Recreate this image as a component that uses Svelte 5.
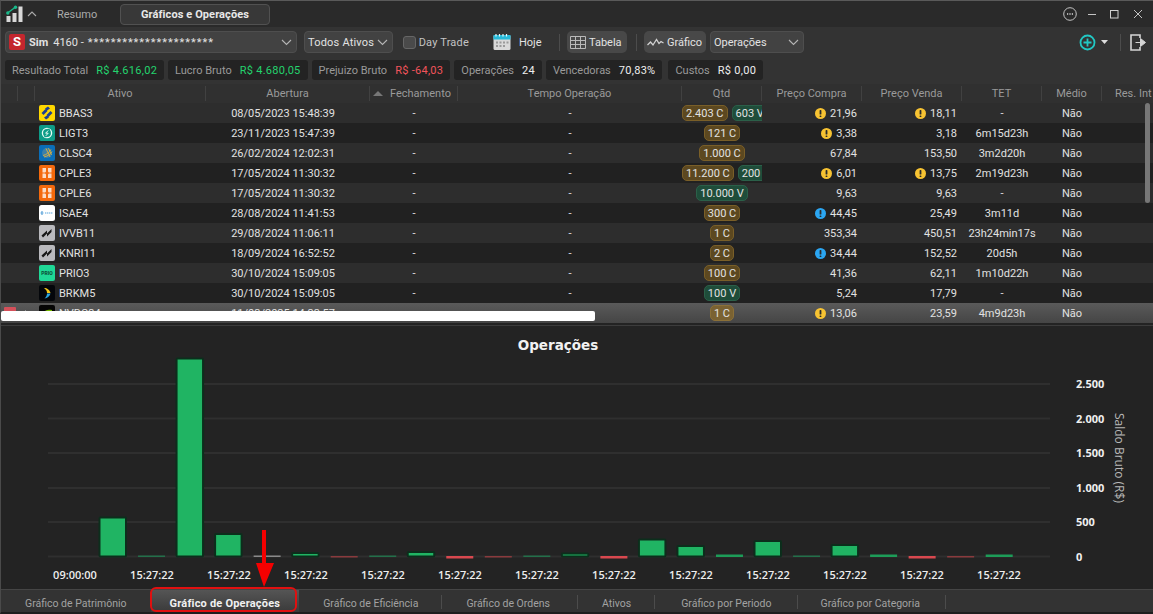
<script>
  const rows = [
    { logo: 'bb', sym: 'BBAS3', open: '08/05/2023 15:48:39', qty: [['2.403 C', 'c'], ['603 V', 'v']], buy: '21,96', buyFlag: 'y', sell: '18,11', sellFlag: 'y', tet: '-' },
    { logo: 'ligt', sym: 'LIGT3', open: '23/11/2023 15:47:39', qty: [['121 C', 'c']], buy: '3,38', buyFlag: 'y', sell: '3,18', tet: '6m15d23h' },
    { logo: 'clsc', sym: 'CLSC4', open: '26/02/2024 12:02:31', qty: [['1.000 C', 'c']], buy: '67,84', sell: '153,50', tet: '3m2d20h' },
    { logo: 'cple', sym: 'CPLE3', open: '17/05/2024 11:30:32', qty: [['11.200 C', 'c'], ['200 V', 'v']], buy: '6,01', buyFlag: 'y', sell: '13,75', sellFlag: 'y', tet: '2m19d23h' },
    { logo: 'cple', sym: 'CPLE6', open: '17/05/2024 11:30:32', qty: [['10.000 V', 'v']], buy: '9,63', sell: '9,63', tet: '-' },
    { logo: 'isae', sym: 'ISAE4', open: '28/08/2024 11:41:53', qty: [['300 C', 'c']], buy: '44,45', buyFlag: 'b', sell: '25,49', tet: '3m11d' },
    { logo: 'fii', sym: 'IVVB11', open: '29/08/2024 11:06:11', qty: [['1 C', 'c']], buy: '353,34', sell: '450,51', tet: '23h24min17s' },
    { logo: 'fii', sym: 'KNRI11', open: '18/09/2024 16:52:52', qty: [['2 C', 'c']], buy: '34,44', buyFlag: 'b', sell: '152,52', tet: '20d5h' },
    { logo: 'prio', sym: 'PRIO3', open: '30/10/2024 15:09:05', qty: [['100 C', 'c']], buy: '41,36', sell: '62,11', tet: '1m10d22h' },
    { logo: 'brkm', sym: 'BRKM5', open: '30/10/2024 15:09:05', qty: [['100 V', 'v']], buy: '5,24', sell: '17,79', tet: '-' },
    { logo: 'nvdc', sym: 'NVDC34', open: '11/03/2025 14:33:57', qty: [['1 C', 'c']], buy: '13,06', buyFlag: 'y', sell: '23,59', tet: '4m9d23h', selected: true }
  ]

  const summary = [
    ['Resultado Total', 'R$ 4.616,02', 'pos'],
    ['Lucro Bruto', 'R$ 4.680,05', 'pos'],
    ['Prejuizo Bruto', 'R$ -64,03', 'neg'],
    ['Operações', '24', ''],
    ['Vencedoras', '70,83%', ''],
    ['Custos', 'R$ 0,00', '']
  ]

  const tabs = ['Gráfico de Patrimônio', 'Gráfico de Operações', 'Gráfico de Eficiência', 'Gráfico de Ordens', 'Ativos', 'Gráfico por Periodo', 'Gráfico por Categoria']

  // bar heights in px above the zero line; dim = thin bars drawn fainter
  const bars = [
    [39, 'g'], [1, 'gd'], [198, 'g'], [22.5, 'g'], [1, 'n'], [3.5, 'g'], [-1, 'rd'], [1, 'gd'],
    [4.5, 'g'], [-2, 'r'], [-1, 'rd'], [1, 'gd'], [3, 'g'], [-2, 'r'], [17, 'g'], [10.5, 'g'],
    [2, 'gm'], [15.5, 'g'], [1, 'gd'], [11.5, 'g'], [2, 'gm'], [-2, 'r'], [-1, 'rd'], [2, 'gm']
  ]
  const zero = 556.5
  const yTicks = [['2.500', 384], ['2.000', 418.5], ['1.500', 453], ['1.000', 488], ['500', 522], ['0', 556.5]]
  const xLabels = ['09:00:00', ...Array(12).fill('15:27:22')]
  const fills = { g: '#20b463', gm: '#1d9c58', gd: '#23704a', n: '#8a8a8a', r: '#d9484f', rd: '#8a3a3d' }
</script>

{#snippet flag(kind)}
  <svg class="flag" width="11" height="11" viewBox="0 0 11 11">
    <circle cx="5.5" cy="5.5" r="5.5" fill={kind === 'y' ? '#f7c332' : '#2ba6f2'} />
    <rect x="4.6" y="2" width="1.8" height="4.6" rx="0.7" fill="#2a2a2a" />
    <rect x="4.6" y="7.4" width="1.8" height="1.7" rx="0.7" fill="#2a2a2a" />
  </svg>
{/snippet}

{#snippet logo(name)}
  <svg class="logo" width="16" height="16" viewBox="0 0 16 16">
    {#if name === 'bb'}
      <rect width="16" height="16" rx="2" fill="#ffd800" />
      <path d="M2.500 8l4-4 2 2-4 4zM7.500 10l4-4 2 2-4 4zM6 3.500l3-2 2 2-3 2zM5 12.500l3-2 2 2-3 2z" fill="#1c3f94" />
    {:else if name === 'ligt'}
      <rect width="16" height="16" rx="2" fill="#0e9c88" />
      <circle cx="8" cy="8" r="4.600" fill="none" stroke="#e8fbf6" stroke-width="1.300" />
      <path d="M10 4L6 12" stroke="#0e9c88" stroke-width="2.400" />
      <path d="M9.200 5.500L6.600 8.200h2.600L6.800 10.800" fill="none" stroke="#e8fbf6" stroke-width="1" />
    {:else if name === 'clsc'}
      <rect width="16" height="16" rx="2" fill="#0a6eb8" />
      <circle cx="8" cy="8" r="5" fill="#3d80a8" />
      <path d="M4 10.500C7 10 11 7 12 4.500M5 12C8 11.500 12 9 13 6.500M7 3.500L11 12M9.500 3.200L12.500 10" stroke="#d2ad45" stroke-width="1" fill="none" />
    {:else if name === 'cple'}
      <rect width="16" height="16" rx="2" fill="#f4690c" />
      <path d="M3.500 3h3.500v3.600l-.8.8H3.500zM9 3h3.500v4.400H9.800L9 6.600zM3.500 8.600h2.700l.8.800V13H3.500zM9.800 8.600h2.700V13H9V9.400z" fill="#fbdcc6" />
    {:else if name === 'isae'}
      <rect width="16" height="16" rx="2.500" fill="#fff" />
      <path d="M1.500 8h3M6 8h8" stroke="#58a6de" stroke-width="1.200" stroke-dasharray="1.400 .6" />
      <path d="M3 6v4" stroke="#3d8fd0" stroke-width="1" />
    {:else if name === 'fii'}
      <rect width="16" height="16" rx="2" fill="#b9b9bd" />
      <path d="M2.500 10.500L8 5.500v3L12.500 4v3L8 11.500v-3L4 12.500z" fill="#161616" />
    {:else if name === 'prio'}
      <rect width="16" height="16" rx="2" fill="#1fd896" />
      <text x="8" y="9.800" text-anchor="middle" class="prio">PRIO</text>
    {:else if name === 'brkm'}
      <rect width="16" height="16" rx="2" fill="#04060a" />
      <path d="M5 3c3 0 6 2 6.500 5H8C8 6 7 4.500 5 3z" fill="#f5c518" />
      <path d="M11.500 8.400C11 11 8.500 13 5.500 13.500 7 12 8 10.300 8 8.400z" fill="#2aa5e0" />
    {:else}
      <rect width="16" height="16" rx="2" fill="#050505" />
      <path d="M4 8c2-3 5-4 9-3v6H7c2 0 4-1 4-3-2-1-4 0-7 0z" fill="#76b900" />
    {/if}
  </svg>
{/snippet}

{#snippet chevron()}
  <svg class="chev" width="11" height="7" viewBox="0 0 11 7"><path d="M1 1l4.500 4.500L10 1" fill="none" stroke="#b5b5b5" stroke-width="1.100" /></svg>
{/snippet}

<div class="window">
  <header class="titlebar">
    <svg class="app-logo" width="18" height="18" viewBox="0 0 18 18">
      <rect x="0.500" y="11" width="4" height="6" fill="#d8d8d8" />
      <rect x="6.500" y="8" width="4" height="9" fill="#d8d8d8" />
      <rect x="12.500" y="1.500" width="4" height="15.500" fill="#d8d8d8" />
      <path d="M1.500 8L9 2.500" stroke="#19b98a" stroke-width="1.500" />
      <circle cx="1.800" cy="8" r="1.700" fill="#19b98a" />
      <circle cx="9.500" cy="2.200" r="1.700" fill="#19b98a" />
    </svg>
    <svg class="collapse" width="10" height="6" viewBox="0 0 10 6"><path d="M1 5l4-4 4 4" fill="none" stroke="#aaa" stroke-width="1.100" /></svg>
    <span class="resumo">Resumo</span>
    <span class="main-tab">Gráficos e Operações</span>
    <div class="win-btns">
      <svg class="more" width="14" height="14" viewBox="0 0 14 14"><circle cx="7" cy="7" r="6.300" fill="none" stroke="#c4c4c4" stroke-width="1" /><path d="M4 7h1.200M6.400 7h1.200M8.800 7h1.200" stroke="#d8d8d8" stroke-width="1.400" /></svg>
      <svg width="10" height="10" viewBox="0 0 10 10"><path d="M1 5.500h8" stroke="#c4c4c4" /></svg>
      <svg width="10" height="10" viewBox="0 0 10 10"><rect x="1.500" y="1.500" width="7.500" height="7.500" fill="none" stroke="#d0d0d0" /></svg>
      <svg class="close" width="10" height="10" viewBox="0 0 10 10"><path d="M1 1l8 8M9 1l-8 8" stroke="#c4c4c4" /></svg>
    </div>
  </header>

  <div class="toolbar">
    <div class="combo account">
      <span class="s-badge">S</span>
      <b>Sim</b>4160 -<span class="stars">**********************</span>
      {@render chevron()}
    </div>
    <div class="combo assets">Todos Ativos {@render chevron()}</div>
    <span class="check"><i></i>Day Trade</span>
    <span class="today">
      <svg width="18" height="18" viewBox="0 0 18 18">
        <rect x="0.500" y="2" width="17" height="15" rx="1.500" fill="#d9d9d9" />
        <rect x="0.500" y="2" width="17" height="4.500" fill="#27b9d8" />
        <path d="M3 1v2.500M6.500 1v2.500M10 1v2.500M13.500 1v2.500" stroke="#e8f8fb" stroke-width="1.200" />
        <path d="M3 8.500h2v2H3zM6.500 8.500h2v2h-2zM10 8.500h2v2h-2zM13.500 8.500h2v2h-2zM3 12h2v2H3zM6.500 12h2v2h-2zM10 12h2v2h-2z" fill="#9a9a9a" />
      </svg>
      Hoje
    </span>
    <span class="sep"></span>
    <span class="tool-btn table-btn">
      <svg width="16" height="13" viewBox="0 0 16 13"><path d="M.5.500h15v12H.5zM.5 4.500h15M.5 8.500h15M5.500.500v12M10.500.500v12" fill="none" stroke="#b9b9b9" /></svg>
      Tabela
    </span>
    <span class="sep sep2"></span>
    <span class="tool-btn chart-btn">
      <svg width="17" height="9" viewBox="0 0 17 9"><path d="M.5 7l3-3 2.500 3 3.500-5.500 2.500 4 2-2 2.500 1.500" fill="none" stroke="#d2d2d2" stroke-width="1.300" /></svg>
      Gráfico
    </span>
    <div class="combo ops">Operações {@render chevron()}</div>
    <div class="tool-right">
      <svg width="17" height="17" viewBox="0 0 17 17"><circle cx="8.500" cy="8.500" r="7" fill="none" stroke="#22c8c4" stroke-width="1.800" /><path d="M8.500 4.500v8M4.500 8.500h8" stroke="#22c8c4" stroke-width="1.800" /></svg>
      <svg class="caret" width="7" height="4" viewBox="0 0 7 4"><path d="M0 0h7L3.500 4z" fill="#ddd" /></svg>
      <span class="sep sep3"></span>
      <svg width="17" height="17" viewBox="0 0 17 17"><path d="M10 4V1H1v15h9v-3" fill="none" stroke="#d5d5d5" stroke-width="1.600" /><path d="M5.500 8.500H13M10.500 4.500l5 4-5 4z" fill="#d5d5d5" stroke="#d5d5d5" stroke-width="1" /></svg>
    </div>
  </div>

  <div class="summary">
    {#each summary as [label, value, tone]}
      <div class="stat"><span class="stat-label">{label}</span><span class="stat-value {tone}">{value}</span></div>
    {/each}
  </div>

  <div class="table">
    <div class="row head">
      <div></div><div></div>
      <div class="c">Ativo</div>
      <div class="c">Abertura</div>
      <div class="c sorted"><svg width="10" height="5" viewBox="0 0 12 6"><path d="M0 6l6-6 6 6z" fill="#777" /></svg>Fechamento</div>
      <div class="c">Tempo Operação</div>
      <div class="c">Qtd</div>
      <div class="c">Preço Compra</div>
      <div class="c">Preço Venda</div>
      <div class="c">TET</div>
      <div class="c">Médio</div>
      <div class="c clip">Res. Int</div>
    </div>
    {#each rows as r, i}
      <div class="row" class:alt={i % 2 === 1} class:selected={r.selected}>
        <div class="mark">{#if r.selected}<span class="mark-red"></span>{/if}</div>
        <div class="mark">{#if r.selected}<svg width="4" height="7" viewBox="0 0 4 7"><path d="M0 0l4 3.500L0 7z" fill="#bbb" /></svg>{/if}</div>
        <div class="asset">{@render logo(r.logo)}{r.sym}</div>
        <div class="c open">{r.open}</div>
        <div class="c">-</div>
        <div class="c">-</div>
        <div class="qty">
          {#each r.qty as [text, side]}<span class="chip {side}">{text}</span>{/each}
        </div>
        <div class="num">{#if r.buyFlag}{@render flag(r.buyFlag)}{/if}{r.buy}</div>
        <div class="num">{#if r.sellFlag}{@render flag(r.sellFlag)}{/if}{r.sell}</div>
        <div class="c">{r.tet}</div>
        <div class="c">Não</div>
        <div></div>
      </div>
    {/each}
    <div class="scroll-thumb"></div>
    <div class="redaction"></div>
  </div>

  <section class="chart">
    <svg width="1153" height="264" viewBox="0 325 1153 264">
      <text class="chart-title" x="558" y="350" text-anchor="middle">Operações</text>
      {#each yTicks as [label, y]}
        <line x1="48" x2="1050" y1={y} y2={y} stroke="#2f2f2f" stroke-width="2" />
        <text class="tick" x="1076" y={y + 4}>{label}</text>
      {/each}
      {#each bars as [h, kind], i}
        {@const x = 99.5 + i * 38.53}
        {#if Math.abs(h) > 2.5}
          <rect {x} y={zero - h} width="26.500" height={h} fill={fills[kind]} stroke="#0c2e1c" stroke-width="2" rx="1" />
        {:else if h > 0}
          <rect {x} y={zero - h} width="27" height={h + 0.5} fill={fills[kind]} />
        {:else}
          <rect {x} y={zero - 0.5} width="27" height={-h + 0.5} fill={fills[kind]} />
        {/if}
      {/each}
      {#each xLabels as label, i}
        <text class="xlabel" x={75 + i * 77} y="579" text-anchor="middle">{label}</text>
      {/each}
      <text class="axis-name" transform="translate(1115 413) rotate(90)">Saldo Bruto (R$)</text>
    </svg>
  </section>

  <nav class="tabs">
    {#each tabs as tab, i}
      <span class="tab" class:active={i === 1}>{tab}</span>
    {/each}
  </nav>

  <!-- annotation drawn over the screenshot -->
  <svg class="arrow" width="20" height="60" viewBox="0 0 20 60">
    <path d="M8 0h4v33h8L10 57 2 33h6z" fill="#f40000" />
  </svg>
  <div class="highlight"></div>
</div>

<style>
  :global(body) { margin: 0; background: #1e1e1e; }

  .window {
    position: relative;
    width: 1153px;
    height: 614px;
    box-sizing: border-box;
    overflow: hidden;
    display: flex;
    flex-direction: column;
    background: #232323;
    border-top: 1px solid #5a5a5a;
    border-left: 1px solid #4a4a4a;
    border-bottom: 2px solid #1e1e1e;
    font: 11px Roboto, "Open Sans", sans-serif;
    color: #e2e2e2;
  }

  .titlebar {
    height: 26px;
    flex: none;
    display: flex;
    align-items: center;
    background: #2a2a2a;
    padding-left: 5px;
    color: #aaa;
  }
  .collapse { margin-left: 3px; }
  .resumo { margin-left: 20px; width: 63px; }
  .main-tab {
    box-sizing: border-box;
    width: 150px;
    height: 21px;
    line-height: 19px;
    text-align: center;
    background: #383838;
    border: 1px solid #515151;
    border-radius: 4px;
    color: #e8e8e8;
    font-weight: 700;
    letter-spacing: 0.1px;
  }
  .win-btns { margin-left: auto; display: flex; align-items: center; gap: 12px; padding-right: 10px; }
  .more { margin-right: -2px; }
  .close { margin-left: 2px; }

  .toolbar {
    height: 30px;
    flex: none;
    display: flex;
    align-items: center;
    padding-left: 4px;
    background: #333;
  }
  .combo {
    box-sizing: border-box;
    height: 22px;
    display: flex;
    align-items: center;
    position: relative;
    background: #424242;
    border: 1px solid #4e4e4e;
    border-radius: 4px;
    padding-left: 3px;
    color: #e2e2e2;
    white-space: nowrap;
    letter-spacing: 0.2px;
  }
  .chev { position: absolute; right: 4px; top: 7px; }
  .account { width: 292px; letter-spacing: 0; }
  .account b { font-weight: 700; margin: 0 5px 0 4px; }
  .stars { letter-spacing: 1px; margin-left: 4px; }
  .s-badge {
    width: 16px;
    height: 16px;
    border-radius: 2px;
    background: #c4262e;
    color: #fff;
    font-weight: 700;
    font-size: 13px;
    line-height: 16px;
    text-align: center;
  }
  .assets { width: 89px; margin-left: 7px; }
  .check { display: flex; align-items: center; gap: 3px; margin-left: 10px; color: #c4c4c4; width: 66px; white-space: nowrap; letter-spacing: 0.2px; }
  .check i { width: 13px; height: 13px; box-sizing: border-box; background: #4a4a4a; border: 1px solid #666; border-radius: 3px; }
  .today { display: flex; align-items: center; gap: 8px; margin-left: 24px; width: 50px; }
  .sep { width: 1px; height: 17px; background: #4c4c4c; margin-left: 16px; }
  .tool-btn {
    box-sizing: border-box;
    height: 22px;
    display: flex;
    align-items: center;
    gap: 3px;
    background: #484848;
    border-radius: 5px;
    padding-left: 3px;
    color: #e2e2e2;
  }
  .table-btn { width: 60px; margin-left: 7px; }
  .sep2 { margin-left: 9px; }
  .chart-btn { width: 62px; margin-left: 7px; }
  .ops { width: 94px; margin-left: 4px; letter-spacing: 0; }
  .tool-right { margin-left: auto; display: flex; align-items: center; padding-right: 6px; }
  .caret { margin-left: 5px; }
  .sep3 { margin: 0 9px 0 12px; }

  .summary {
    height: 27px;
    flex: none;
    box-sizing: border-box;
    padding: 3px 0 4px 4px;
    display: flex;
    gap: 4px;
    background: #333;
  }
  .stat {
    display: flex;
    align-items: center;
    gap: 8px;
    padding: 0 7px;
    background: #232323;
    border-radius: 3px;
  }
  .stat:last-child { margin-left: 2px; }
  .stat-label { color: #9a9a9a; }
  .stat-value { color: #eee; letter-spacing: 0.28px; }
  .pos { color: #23d36e; }
  .neg { color: #f2545b; }

  .table { position: relative; flex: none; }
  .row {
    display: grid;
    grid-template-columns: 17px 17px 171px 164px 88px 224px 80px 100px 100px 80px 60px 51px;
    height: 20px;
    box-sizing: border-box;
    align-items: center;
    background: #2d2d2d;
    white-space: nowrap;
  }
  .row.alt { background: #212121; }
  .row.selected { background: linear-gradient(#5a5a5a, #454545); }
  .row.head {
    height: 19px;
    background: #303030;
    color: #9a9a9a;
  }
  .row.head > div { height: 15px; line-height: 16px; border-right: 1px solid #414141; }
  .row.head > div:last-child { border-right: 0; }
  .c { text-align: center; }
  .clip { overflow: hidden; text-align: left; padding-left: 13px; }
  .sorted { display: flex; align-items: center; gap: 7px; padding-left: 3px; }
  .open { padding-right: 10px; }
  .mark { display: flex; align-items: center; justify-content: center; }
  .mark-red { width: 12px; height: 12px; background: #d4505a; border-radius: 1px; }
  .asset { display: flex; align-items: center; gap: 4px; padding-left: 4px; }
  .logo { flex: none; }
  .prio { font-size: 5px; font-weight: 800; fill: #0c4b37; }
  .qty { display: flex; justify-content: safe center; gap: 4px; overflow: hidden; }
  .chip {
    flex: none;
    box-sizing: border-box;
    height: 16px;
    line-height: 15px;
    padding: 0 3px;
    border-radius: 5px;
    border: 1px solid;
  }
  .chip.c { background: #5c4820; border-color: #7a5f28; }
  .chip.v { background: #1f4d3a; border-color: #2b6049; }
  .selected .chip.c { background: #7a6232; border-color: #8b7038; }
  .num { display: flex; justify-content: flex-end; align-items: center; gap: 4px; padding-right: 5px; }
  .scroll-thumb {
    position: absolute;
    right: 3px;
    top: 19px;
    width: 5px;
    height: 100px;
    border-radius: 3px;
    background: #777;
  }
  .redaction {
    position: absolute;
    left: 0;
    top: 227px;
    width: 594px;
    height: 10px;
    background: #fff;
    border-radius: 2px;
  }

  .chart {
    flex: none;
    height: 264px;
    margin-top: 2px;
    border-top: 1px solid #3c3c3c;
    box-sizing: border-box;
    background: #232323;
  }
  .chart svg { display: block; margin-left: -1px; margin-top: -1px; }
  .chart-title { font: 700 13.5px "DejaVu Sans", sans-serif; fill: #f2f2f2; }
  .tick { font: 700 11px "Open Sans", sans-serif; fill: #f0f0f0; }
  .xlabel { font: 600 11px "Open Sans", sans-serif; fill: #eee; }
  .axis-name { font: 12px "Open Sans", sans-serif; fill: #b8b8b8; }

  .tabs {
    flex: 1;
    display: flex;
    align-items: stretch;
    background: #333;
    border-top: 1px solid #454545;
    color: #a2a2a2;
    font-size: 10.5px;
  }
  .tab {
    display: flex;
    align-items: center;
    justify-content: center;
    position: relative;
    padding: 4px 24px 0;
  }
  .tab:nth-child(4) { padding-right: 28px; }
  .tab:nth-child(6) { padding: 4px 26px 0; }
  .tab:nth-child(7) { padding: 4px 26px 0 23px; }
  .tab:not(:first-child):not(.active)::after {
    content: '';
    position: absolute;
    right: 0;
    top: 5px;
    bottom: 3px;
    width: 1px;
    background: #4c4c4c;
  }
  .tab.active {
    padding: 4px 19px 0;
    background: linear-gradient(#555, #3a3a3a);
    color: #f0f0f0;
    font-size: 11px;
    font-weight: 700;
    letter-spacing: 0.2px;
  }

  .arrow { position: absolute; left: 253px; top: 529px; }
  .highlight {
    position: absolute;
    left: 149px;
    top: 586px;
    width: 147px;
    height: 25px;
    box-sizing: border-box;
    border: 2px solid #e01010;
    border-radius: 6px;
  }
</style>
